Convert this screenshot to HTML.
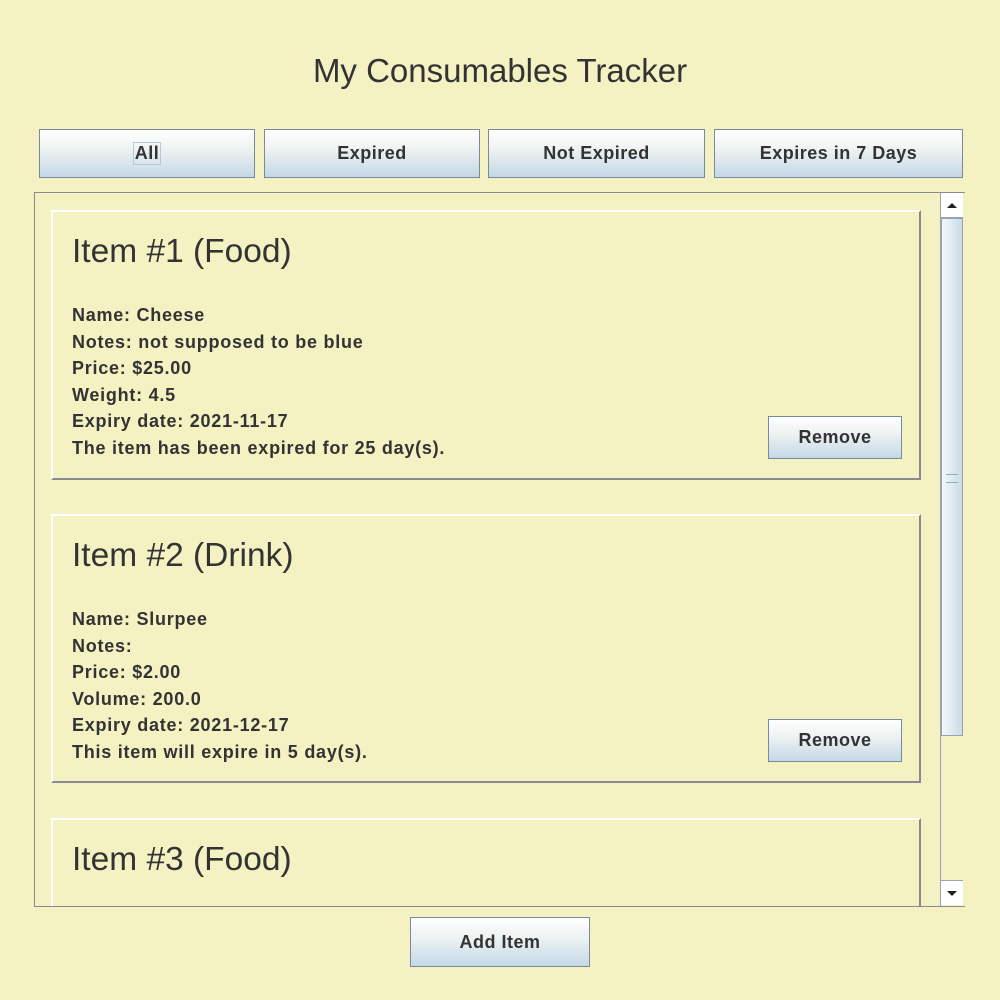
<!DOCTYPE html>
<html><head><style>
body{margin:0;width:1000px;height:1000px;background:#f4f2c2;font-family:"Liberation Sans",sans-serif;position:relative;overflow:hidden;color:#333}
.a{position:absolute}
.btn{position:absolute;box-sizing:border-box;border:1px solid #7a8a9e;background:linear-gradient(#ffffff,#eef3f2 40%,#c4d8e6);font-weight:bold;font-size:18px;letter-spacing:0.5px;color:#333;display:flex;align-items:center;justify-content:center}
.card{position:absolute;left:51px;width:870px;box-sizing:border-box;border-top:2px solid #fff;border-left:2px solid #fff;border-right:2px solid #8a8a90;border-bottom:2px solid #8a8a90}
.card h2{position:absolute;left:19px;top:21px;margin:0;font-weight:normal;font-size:33.5px;color:#333}
.card .t{position:absolute;left:19px;top:90px;font-size:18px;font-weight:bold;letter-spacing:0.75px;line-height:26.6px;color:#333}
</style></head><body>
<div class="a" style="left:0;width:1000px;top:52px;text-align:center;font-size:33px;color:#333">My Consumables Tracker</div>
<div class="btn" style="left:39px;top:129px;width:216px;height:49px"><span style="border:1px solid #b8c8d8;padding:0 1px">All</span></div>
<div class="btn" style="left:264px;top:129px;width:216px;height:49px">Expired</div>
<div class="btn" style="left:488px;top:129px;width:217px;height:49px">Not Expired</div>
<div class="btn" style="left:714px;top:129px;width:249px;height:49px">Expires in 7 Days</div>
<div class="a" style="left:34px;top:192px;width:931px;height:715px;box-sizing:border-box;border:1px solid #8a8a90;overflow:hidden">
</div>
<div class="card" style="top:210px;height:270px"><h2>Item #1 (Food)</h2><div class="t">Name: Cheese<br>Notes: not supposed to be blue<br>Price: $25.00<br>Weight: 4.5<br>Expiry date: 2021-11-17<br>The item has been expired for 25 day(s).</div></div>
<div class="btn" style="left:768px;top:416px;width:134px;height:43px;font-size:18px">Remove</div>
<div class="card" style="top:514px;height:269px"><h2>Item #2 (Drink)</h2><div class="t">Name: Slurpee<br>Notes:<br>Price: $2.00<br>Volume: 200.0<br>Expiry date: 2021-12-17<br>This item will expire in 5 day(s).</div></div>
<div class="btn" style="left:768px;top:719px;width:134px;height:43px;font-size:18px">Remove</div>
<div class="card" style="top:818px;height:88px;border-bottom:none"><h2>Item #3 (Food)</h2></div>
<div class="a" style="left:940px;top:193px;width:24px;height:713px;border-left:1px solid #9aa0b8;background:#f4f2c2"></div>
<div class="a" style="left:941px;top:193px;width:22px;height:24px;border-bottom:1px solid #9aa0b8;background:#fff;display:flex;align-items:center;justify-content:center"><div style="width:0;height:0;border-left:5px solid transparent;border-right:5px solid transparent;border-bottom:5px solid #222"></div></div>
<div class="a" style="left:941px;top:218px;width:20px;height:516px;border:1px solid #9aa0b8;background:linear-gradient(90deg,#f4f8fb,#c8dce8)"></div>
<div class="a" style="left:946px;top:474px;width:12px;height:7px;border-top:1px solid #9aa;border-bottom:1px solid #9aa"></div>
<div class="a" style="left:941px;top:880px;width:22px;height:24px;border-top:1px solid #9aa0b8;background:#fff;display:flex;align-items:center;justify-content:center"><div style="width:0;height:0;border-left:5px solid transparent;border-right:5px solid transparent;border-top:5px solid #222"></div></div>
<div class="btn" style="left:410px;top:917px;width:180px;height:50px">Add Item</div>
</body></html>
